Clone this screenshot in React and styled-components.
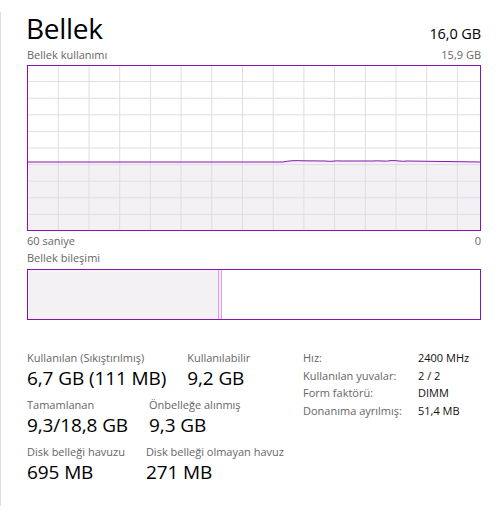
import React from "react";
import styled, { createGlobalStyle } from "styled-components";

const GlobalStyle = createGlobalStyle`
  html, body {
    margin: 0;
    padding: 0;
    background: #ffffff;
  }
  body {
    font-family: "Open Sans", "Noto Sans", "Liberation Sans", sans-serif;
    color: #000;
  }
`;

const PURPLE = "#8b12ae";

const Page = styled.div`
  width: 502px;
  height: 529px;
  padding-top: 12px;
  box-sizing: border-box;
`;

const Panel = styled.div`
  height: 494px;
  border-left: 1px solid #dcdcdc;
  padding: 0 21px 0 26px;
  box-sizing: border-box;
`;

const HeaderRow = styled.div`
  display: flex;
  justify-content: space-between;
  align-items: baseline;
  height: 32px;
`;

const Title = styled.div`
  font-size: 28px;
  line-height: 32px;
  letter-spacing: -0.3px;
  margin-left: -1px;
`;

const Capacity = styled.div`
  font-size: 14.5px;
  letter-spacing: -0.1px;
`;

const CaptionRow = styled.div`
  display: flex;
  justify-content: space-between;
  font-size: 11px;
  line-height: 14px;
  color: #666;
  margin-top: ${(p) => p.$top || 0}px;
`;

const ChartBox = styled.div`
  margin-top: 3px;
  width: 454px;
  height: 166px;
`;

const Composition = styled.div`
  margin-top: 4px;
  display: flex;
  width: 454px;
  height: 51px;
  border: 1px solid ${PURPLE};
  box-sizing: border-box;
`;

const Segment = styled.div`
  width: ${(p) => p.$w}px;
  flex: ${(p) => (p.$w ? "none" : 1)};
  background: ${(p) => p.$bg};
  border-right: ${(p) => (p.$edge ? "1px solid #d4a6de" : "none")};
`;

const Stats = styled.div`
  display: flex;
  align-items: flex-start;
  margin-top: 29px;
`;

const Left = styled.div`
  width: 276px;
  display: flex;
  flex-direction: column;
  gap: 5px;
`;

const StatRow = styled.div`
  display: flex;
  gap: 21px;
`;

const Stat = styled.div`
  display: flex;
  flex-direction: column;
`;

const Label = styled.div`
  font-size: 11px;
  line-height: 17px;
  color: #666;
  white-space: nowrap;
`;

const Value = styled.div`
  font-size: 19px;
  line-height: 25px;
  white-space: nowrap;
  letter-spacing: -0.1px;
`;

const Specs = styled.div`
  display: grid;
  grid-template-columns: 115px auto;
  font-size: 11px;
  line-height: 17.5px;
`;

const SpecKey = styled.div`
  color: #666;
  white-space: nowrap;
`;

const SpecVal = styled.div`
  color: #111;
  white-space: nowrap;
`;

function UsageChart() {
  const w = 454;
  const h = 166;
  const vx = [];
  for (let i = 0; i < 14; i++) vx.push(31.3 + i * 30.7);
  const hy = [];
  for (let i = 1; i < 10; i++) hy.push(i * 16.6);
  const level = 97;
  const line =
    `M0 ${level} L256 ${level} C262 ${level - 1.5} 270 ${level - 1.5} 276 ${level - 1.2} ` +
    `L298 ${level - 1} C304 ${level} 308 ${level - 1.6} 314 ${level - 1} L346 ${level - 1} ` +
    `C352 ${level - 1.8} 358 ${level} 364 ${level - 1.4} C370 ${level - 1.8} 374 ${level} 380 ${level - 1} ` +
    `L${w} ${level}`;
  return (
    <svg width={w} height={h} viewBox={`0 0 ${w} ${h}`}>
      <path d={`${line} L${w} ${h} L0 ${h} Z`} fill="#f4f1f5" />
      {vx.map((x) => (
        <line key={"v" + x} x1={x} y1={0} x2={x} y2={h} stroke="#e2dce4" strokeWidth="1" />
      ))}
      {hy.map((y) => (
        <line key={"h" + y} x1={0} y1={y} x2={w} y2={y} stroke="#e2dce4" strokeWidth="1" />
      ))}
      <path d={line} fill="none" stroke={PURPLE} strokeWidth="1" />
      <rect x="0.5" y="0.5" width={w - 1} height={h - 1} fill="none" stroke={PURPLE} strokeWidth="1" />
    </svg>
  );
}

export default function App() {
  return (
    <Page>
      <GlobalStyle />
      <Panel>
        <HeaderRow>
          <Title>Bellek</Title>
          <Capacity>16,0 GB</Capacity>
        </HeaderRow>
        <CaptionRow $top={4}>
          <span>Bellek kullanımı</span>
          <span>15,9 GB</span>
        </CaptionRow>
        <ChartBox>
          <UsageChart />
        </ChartBox>
        <CaptionRow $top={3}>
          <span>60 saniye</span>
          <span>0</span>
        </CaptionRow>
        <CaptionRow $top={3}>
          <span>Bellek bileşimi</span>
        </CaptionRow>
        <Composition>
          <Segment $w={190} $bg="#f4f1f5" $edge />
          <Segment $w={2} $bg="#f6e6f9" $edge />
          <Segment $bg="#ffffff" />
        </Composition>
        <Stats>
          <Left>
            <StatRow>
              <Stat>
                <Label>Kullanılan (Sıkıştırılmış)</Label>
                <Value>6,7 GB (111 MB)</Value>
              </Stat>
              <Stat>
                <Label>Kullanılabilir</Label>
                <Value>9,2 GB</Value>
              </Stat>
            </StatRow>
            <StatRow>
              <Stat>
                <Label>Tamamlanan</Label>
                <Value>9,3/18,8 GB</Value>
              </Stat>
              <Stat>
                <Label>Önbelleğe alınmış</Label>
                <Value>9,3 GB</Value>
              </Stat>
            </StatRow>
            <StatRow>
              <Stat>
                <Label>Disk belleği havuzu</Label>
                <Value>695 MB</Value>
              </Stat>
              <Stat>
                <Label>Disk belleği olmayan havuz</Label>
                <Value>271 MB</Value>
              </Stat>
            </StatRow>
          </Left>
          <Specs>
            <SpecKey>Hız:</SpecKey>
            <SpecVal>2400 MHz</SpecVal>
            <SpecKey>Kullanılan yuvalar:</SpecKey>
            <SpecVal>2 / 2</SpecVal>
            <SpecKey>Form faktörü:</SpecKey>
            <SpecVal>DIMM</SpecVal>
            <SpecKey>Donanıma ayrılmış:</SpecKey>
            <SpecVal>51,4 MB</SpecVal>
          </Specs>
        </Stats>
      </Panel>
    </Page>
  );
}
